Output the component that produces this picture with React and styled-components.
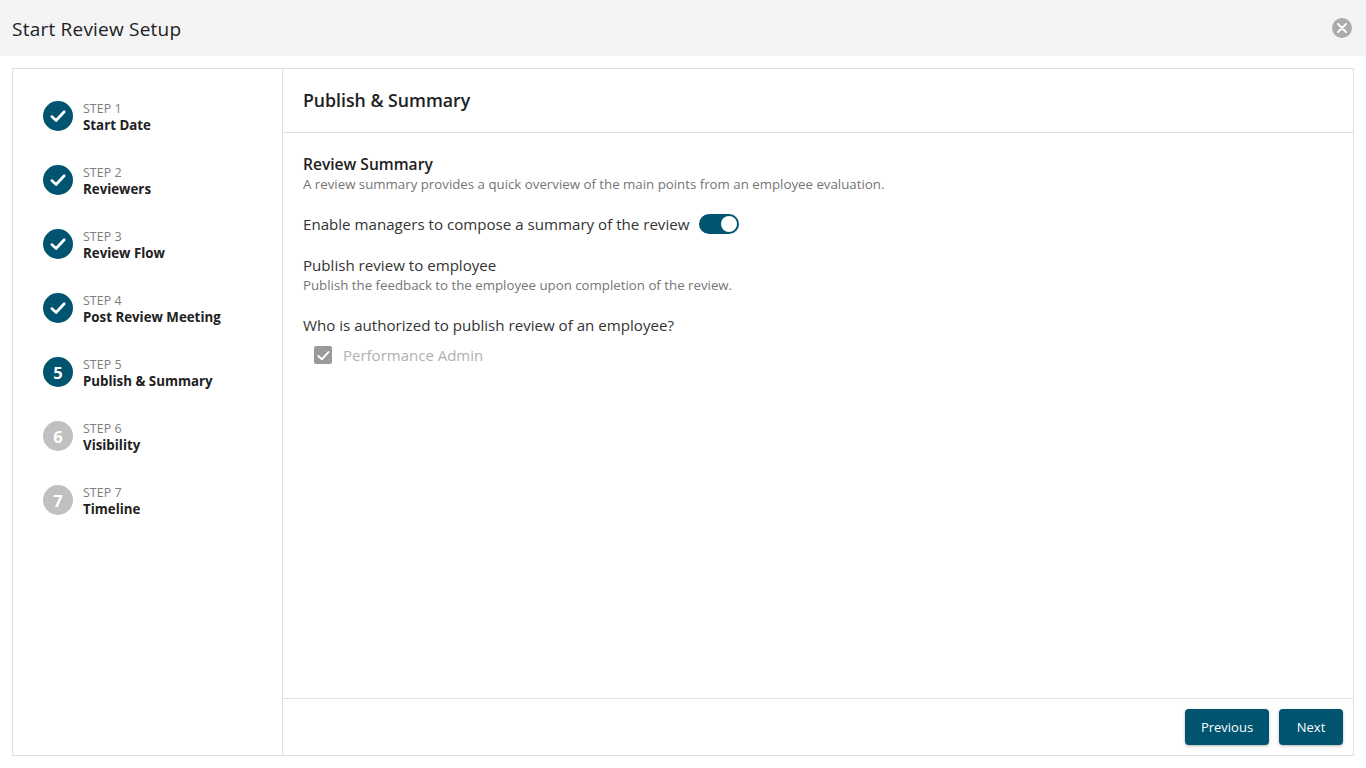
import React from 'react';
import styled, { createGlobalStyle } from 'styled-components';

const GlobalStyle = createGlobalStyle`
  html, body {
    margin: 0;
    padding: 0;
    height: 100%;
    background: #ffffff;
    font-family: 'Open Sans', 'Noto Sans', sans-serif;
    color: #212121;
    overflow: hidden;
  }
  * {
    box-sizing: border-box;
  }
`;

const Page = styled.div`
  width: 1366px;
  height: 768px;
  display: flex;
  flex-direction: column;
`;

const Header = styled.header`
  height: 56px;
  flex: none;
  background: #f4f4f4;
  display: flex;
  align-items: center;
  justify-content: space-between;
  padding: 0 14px 0 12px;
`;

const HeaderTitle = styled.h1`
  margin: 2px 0 0;
  font-size: 19px;
  font-weight: 400;
  letter-spacing: 0.22px;
  color: #212121;
`;

const CloseButton = styled.button`
  width: 20px;
  height: 20px;
  padding: 0;
  border: 0;
  border-radius: 50%;
  background: #ababab;
  display: flex;
  align-items: center;
  justify-content: center;
`;

const Frame = styled.div`
  margin: 12px 12px 12px;
  height: 688px;
  border: 1px solid #e0e0e0;
  display: flex;
`;

const Sidebar = styled.nav`
  width: 270px;
  flex: none;
  border-right: 1px solid #e0e0e0;
  padding: 31px 0 0 30px;
  display: flex;
  flex-direction: column;
  gap: 30px;
`;

const Step = styled.div`
  height: 34px;
  display: flex;
  align-items: flex-start;
  gap: 10px;
`;

const StepBadge = styled.div`
  width: 30px;
  height: 30px;
  margin-top: 1px;
  flex: none;
  border-radius: 50%;
  background: ${(p) => (p.$pending ? '#c0c0c0' : '#005470')};
  color: #ffffff;
  font-size: 16.5px;
  font-weight: 700;
  display: flex;
  align-items: center;
  justify-content: center;
`;

const StepText = styled.div`
  margin-top: 1px;
  display: flex;
  flex-direction: column;
`;

const StepNumber = styled.span`
  font-size: 12.5px;
  line-height: 16px;
  color: #7d7d7d;
`;

const StepName = styled.span`
  font-size: 13.3px;
  line-height: 17px;
  font-weight: 700;
  color: #212121;
  white-space: nowrap;
`;

const Main = styled.main`
  flex: 1;
  display: flex;
  flex-direction: column;
`;

const MainHeader = styled.div`
  height: 64px;
  flex: none;
  border-bottom: 1px solid #e0e0e0;
  padding: 0 20px 2px;
  display: flex;
  align-items: center;
`;

const MainTitle = styled.h2`
  margin: 0;
  font-size: 17.7px;
  font-weight: 600;
  color: #212121;
`;

const Content = styled.div`
  flex: 1;
  padding: 21px 20px 0;
`;

const SectionTitle = styled.div`
  font-size: 15.6px;
  line-height: 20px;
  font-weight: 600;
  color: #212121;
`;

const Hint = styled.div`
  margin-top: ${(p) => p.$top || 0}px;
  font-size: 13.27px;
  line-height: 18px;
  color: #757575;
`;

const ToggleRow = styled.div`
  margin-top: 21px;
  display: flex;
  align-items: center;
  gap: 10px;
`;

const Label = styled.div`
  font-size: 15.12px;
  line-height: 20px;
  color: #333333;
`;

const Toggle = styled.div`
  width: 40px;
  height: 20px;
  border-radius: 10px;
  background: #005470;
  padding: 2px 2px;
  display: flex;
  justify-content: flex-end;
`;

const ToggleKnob = styled.span`
  width: 16px;
  height: 16px;
  border-radius: 50%;
  background: #ffffff;
`;

const Block = styled.div`
  margin-top: ${(p) => p.$top || 21}px;
`;

const CheckRow = styled.label`
  margin-top: 10px;
  margin-left: 11px;
  display: flex;
  align-items: center;
  gap: 11px;
`;

const CheckBox = styled.span`
  width: 18px;
  height: 18px;
  border-radius: 2px;
  background: #9a9a9a;
  display: flex;
  align-items: center;
  justify-content: center;
`;

const CheckLabel = styled.span`
  font-size: 15px;
  color: #b0b0b0;
`;

const Footer = styled.div`
  height: 57px;
  flex: none;
  border-top: 1px solid #e0e0e0;
  padding: 0 10px;
  display: flex;
  align-items: center;
  justify-content: flex-end;
  gap: 10px;
`;

const Button = styled.button`
  height: 36px;
  width: ${(p) => p.$width}px;
  border: 0;
  border-radius: 4px;
  background: #005470;
  color: #ffffff;
  font-family: inherit;
  font-size: 13px;
  font-weight: 500;
  box-shadow: 0 1px 3px rgba(0, 0, 0, 0.3);
`;

const Check = ({ size = 18, width = 2.4 }) => (
  <svg width={size} height={size} viewBox="0 0 16 16" fill="none">
    <path
      d="M2.5 8.5 L6.3 12 L13.5 4.2"
      stroke="#ffffff"
      strokeWidth={width}
      strokeLinecap="round"
      strokeLinejoin="round"
    />
  </svg>
);

const steps = [
  { n: 1, name: 'Start Date', done: true },
  { n: 2, name: 'Reviewers', done: true },
  { n: 3, name: 'Review Flow', done: true },
  { n: 4, name: 'Post Review Meeting', done: true },
  { n: 5, name: 'Publish & Summary' },
  { n: 6, name: 'Visibility', pending: true },
  { n: 7, name: 'Timeline', pending: true },
];

const App = () => {
  return (
    <Page>
      <GlobalStyle />
      <Header>
        <HeaderTitle>Start Review Setup</HeaderTitle>
        <CloseButton aria-label="Close">
          <svg width="10" height="10" viewBox="0 0 10 10">
            <path
              d="M1 1 L9 9 M9 1 L1 9"
              stroke="#ffffff"
              strokeWidth="2"
              strokeLinecap="round"
            />
          </svg>
        </CloseButton>
      </Header>
      <Frame>
        <Sidebar>
          {steps.map((s) => (
            <Step key={s.n}>
              <StepBadge $pending={s.pending}>
                {s.done ? <Check /> : s.n}
              </StepBadge>
              <StepText>
                <StepNumber>STEP {s.n}</StepNumber>
                <StepName>{s.name}</StepName>
              </StepText>
            </Step>
          ))}
        </Sidebar>
        <Main>
          <MainHeader>
            <MainTitle>Publish &amp; Summary</MainTitle>
          </MainHeader>
          <Content>
            <SectionTitle>Review Summary</SectionTitle>
            <Hint $top={1}>
              A review summary provides a quick overview of the main points from
              an employee evaluation.
            </Hint>
            <ToggleRow>
              <Label>Enable managers to compose a summary of the review</Label>
              <Toggle>
                <ToggleKnob />
              </Toggle>
            </ToggleRow>
            <Block>
              <Label>Publish review to employee</Label>
              <Hint $top={1}>
                Publish the feedback to the employee upon completion of the
                review.
              </Hint>
            </Block>
            <Block>
              <Label>Who is authorized to publish review of an employee?</Label>
              <CheckRow>
                <CheckBox>
                  <Check size={15} width={2} />
                </CheckBox>
                <CheckLabel>Performance Admin</CheckLabel>
              </CheckRow>
            </Block>
          </Content>
          <Footer>
            <Button $width={84}>Previous</Button>
            <Button $width={64}>Next</Button>
          </Footer>
        </Main>
      </Frame>
    </Page>
  );
};

export default App;
